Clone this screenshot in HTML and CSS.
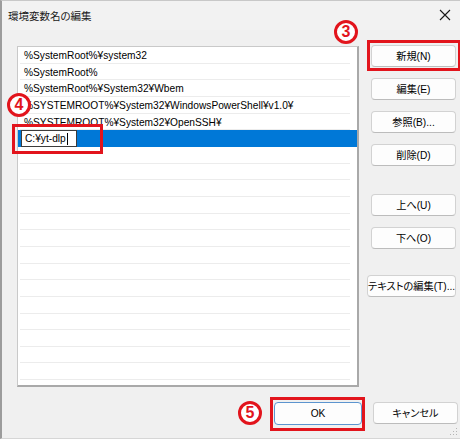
FILE: index.html
```html
<!DOCTYPE html>
<html lang="ja">
<head>
<meta charset="utf-8">
<title>環境変数名の編集</title>
<link rel="stylesheet" href="styles.css">
</head>
<body>
<div class="win">
  <div class="titlebar">
    <span class="title">環境変数名の編集</span>
    <svg class="close" width="12" height="12" viewBox="0 0 12 12"><path d="M1 1 L11 11 M11 1 L1 11" stroke="#1a1a1a" stroke-width="1.1" fill="none"/></svg>
  </div>
  <div class="content">
    <div class="list">
      <div class="row">%SystemRoot%¥system32</div>
      <div class="row">%SystemRoot%</div>
      <div class="row">%SystemRoot%¥System32¥Wbem</div>
      <div class="row">%SYSTEMROOT%¥System32¥WindowsPowerShell¥v1.0¥</div>
      <div class="row">%SYSTEMROOT%¥System32¥OpenSSH¥</div>
      <div class="row sel"><span class="edit">C:¥yt-dlp<span class="caret"></span></span></div>
      <div class="row"></div>
      <div class="row"></div>
      <div class="row"></div>
      <div class="row"></div>
      <div class="row"></div>
      <div class="row"></div>
      <div class="row"></div>
      <div class="row"></div>
      <div class="row"></div>
      <div class="row"></div>
      <div class="row"></div>
      <div class="row"></div>
      <div class="row"></div>
      <div class="row"></div>
    </div>
    <div class="side">
      <button class="btn">新規(N)</button>
      <button class="btn">編集(E)</button>
      <button class="btn">参照(B)...</button>
      <button class="btn">削除(D)</button>
      <button class="btn gap1">上へ(U)</button>
      <button class="btn">下へ(O)</button>
      <button class="btn wide gap2">テキストの編集(T)...</button>
    </div>
  </div>
  <div class="footer">
    <button class="btn ok">OK</button>
    <button class="btn">キャンセル</button>
  </div>
  <svg class="grip" width="8" height="8" viewBox="0 0 8 8"><g fill="#b5b5b5"><rect x="6" y="0" width="1" height="1"/><rect x="3" y="3" width="1" height="1"/><rect x="6" y="3" width="1" height="1"/><rect x="0" y="6" width="1" height="1"/><rect x="3" y="6" width="1" height="1"/><rect x="6" y="6" width="1" height="1"/></g></svg>

  <div class="mark box-new"></div>
  <div class="mark box-edit"></div>
  <div class="mark box-ok"></div>
  <div class="num n3">3</div>
  <div class="num n4">4</div>
  <div class="num n5">5</div>
</div>
</body>
</html>
```

FILE: styles.css
```css
* { box-sizing: border-box; }
html, body { margin: 0; padding: 0; }
body {
  width: 460px;
  height: 439px;
  overflow: hidden;
  background: #f0f0f0;
  font-family: "Liberation Sans", "Noto Sans CJK JP", sans-serif;
  font-size: 10.2px;
  font-feature-settings: "palt";
  color: #000;
}
.win {
  position: relative;
  width: 460px;
  height: 439px;
  border-left: 2px solid #9c9c9c;
  border-top: 1px solid #c8c8c8;
  border-bottom: 1px solid #d6d6d6;
  background: #f0f0f0;
}
.titlebar {
  height: 29px;
  display: flex;
  align-items: center;
  justify-content: space-between;
  padding: 0 9px 0 6px;
  background: #f2f2f2;
}
.title { font-size: 10.5px; color: #1a1a1a; }
.close { display: block; margin-top: -2px; }

.content {
  display: flex;
  padding: 16px 0 0 15px;
}
.list {
  width: 342px;
  height: 341px;
  background: #fff;
  border-top: 1px solid #c9c9c9;
  border-left: 1px solid #c9c9c9;
  border-right: 2px solid #a9a9a9;
  border-bottom: 2px solid #a9a9a9;
  display: flex;
  flex-direction: column;
  overflow: hidden;
}
.row {
  height: 16.67px;
  flex: none;
  line-height: 18.5px;
  padding-left: 6px;
  white-space: nowrap;
  background: linear-gradient(#ececec, #ececec) no-repeat;
  background-size: calc(100% - 9px) 1px;
  background-position: 2px 100%;
}
.row.sel {
  background: #0078d7;
  padding-left: 3px;
  display: flex;
  align-items: stretch;
}
.edit {
  display: flex;
  align-items: center;
  width: 56px;
  background: #fff;
  border: 1px solid #3c3c3c;
  padding-left: 3px;
  line-height: 14px;
}
.caret {
  display: inline-block;
  width: 1px;
  height: 12px;
  background: #000;
  margin-left: 1px;
}

.side {
  display: flex;
  flex-direction: column;
  align-items: flex-start;
  gap: 11px;
  margin-left: 12px;
  margin-top: -1px;
}
.btn {
  width: 85px;
  height: 22px;
  padding: 0;
  font-family: inherit;
  font-size: 10.2px;
  font-feature-settings: "palt";
  color: #000;
  background: #fdfdfd;
  border: 1px solid #d2d2d2;
  border-bottom-color: #bcbcbc;
  border-radius: 4px;
  line-height: 19px;
  white-space: nowrap;
}
.gap1 { margin-top: 17px; }
.gap2 { margin-top: 15px; }
.wide { width: 89px; margin-left: -4px; }

.footer {
  display: flex;
  justify-content: flex-end;
  gap: 11px;
  padding-right: 2px;
  margin-top: 15px;
}
.btn.ok { width: 88px; height: 23px; border-color: #5c95cf; }

.grip { position: absolute; right: 2px; bottom: 2px; }

.mark {
  position: absolute;
  border: 3px solid #e2141c;
}
.box-new { left: 365px; top: 39px; width: 94px; height: 31px; }
.box-edit { left: 10px; top: 123px; width: 91px; height: 30px; }
.box-ok { left: 268px; top: 396px; width: 95px; height: 34px; }

.num {
  position: absolute;
  width: 24px;
  height: 24px;
  border: 3px solid #e2141c;
  border-radius: 50%;
  background: #fff;
  color: #e2141c;
  font-family: "Liberation Sans", Arial, sans-serif;
  font-weight: bold;
  font-size: 16px;
  line-height: 18px;
  text-align: center;
}
.n3 { left: 332px; top: 19px; }
.n4 { left: 5px; top: 92px; }
.n5 { left: 236px; top: 400px; }
```
